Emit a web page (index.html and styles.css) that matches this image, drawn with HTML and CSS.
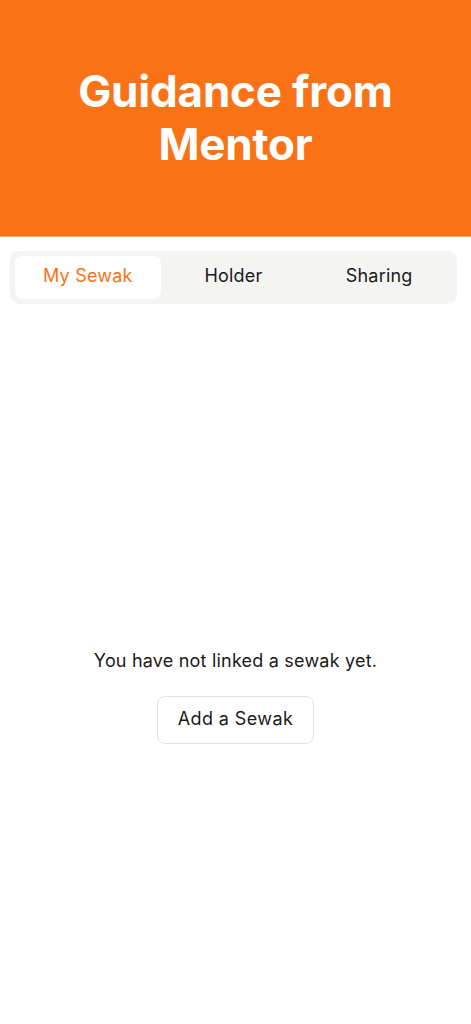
FILE: index.html
```html
<!DOCTYPE html>
<html lang="en">
<head>
    <meta charset="UTF-8">
    <meta name="viewport" content="width=device-width, initial-scale=1.0">
    <title>Guidance from Mentor</title>
    <link rel="stylesheet" href="styles.css">
</head>
<body>
    <header class="hero">
        <h1>Guidance from<br>Mentor</h1>
    </header>

    <div class="tabs-wrap">
        <div class="tabs">
            <button class="tab active">My Sewak</button>
            <button class="tab">Holder</button>
            <button class="tab">Sharing</button>
        </div>
    </div>

    <div class="empty">
        <p class="empty-text">You have not linked a sewak yet.</p>
        <button class="add-btn">Add a Sewak</button>
    </div>
</body>
</html>
```

FILE: styles.css
```css
body {
    margin: 0;
    font-family: Inter, "Noto Sans", sans-serif;
    background-color: #fff;
    color: #1a1a1a;
}
.hero {
    background-color: #f97316;
    height: 236px;
    display: flex;
    align-items: center;
    justify-content: center;
    border-bottom: 1px solid #fba66a;
}
.hero h1 {
    margin: 0;
    color: #fff;
    font-size: 44px;
    font-weight: 700;
    line-height: 53px;
    text-align: center;
    letter-spacing: -0.2px;
}
.tabs-wrap {
    padding: 14px 14px 0 10px;
}
.tabs {
    display: grid;
    grid-template-columns: repeat(3, 1fr);
    padding: 5px;
    background-color: #f4f4f3;
    border-radius: 9px;
}
.tab {
    height: 43px;
    padding: 0 0 5px;
    border: none;
    background: none;
    font-family: Inter, "Noto Sans", sans-serif;
    font-size: 18px;
    letter-spacing: 0.2px;
    color: #1a1a1a;
    border-radius: 8px;
    cursor: pointer;
}
.tab.active {
    background-color: #fff;
    color: #f97316;
}
.empty {
    display: flex;
    flex-direction: column;
    align-items: center;
    margin-top: 345px;
}
.empty-text {
    margin: 0;
    font-size: 18px;
    line-height: 24px;
    letter-spacing: 0.2px;
    color: #1a1a1a;
}
.add-btn {
    margin-top: 23px;
    padding: 10px 20px 12px;
    font-family: Inter, "Noto Sans", sans-serif;
    font-size: 18px;
    line-height: 24px;
    letter-spacing: 0.4px;
    color: #1a1a1a;
    background-color: #fff;
    border: 1px solid #e3e3e3;
    border-radius: 8px;
    cursor: pointer;
}
```
